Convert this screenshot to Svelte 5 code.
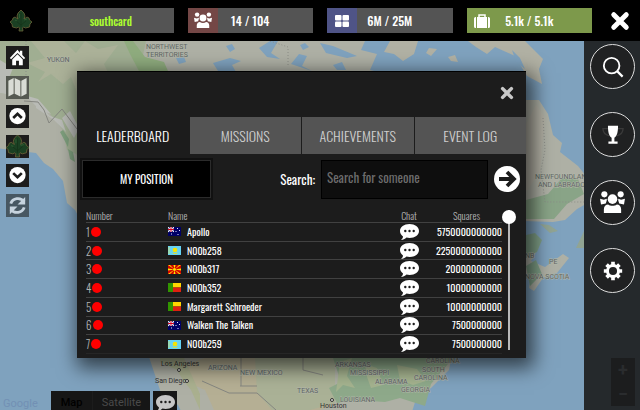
<script>
  const stats = [
    { id: 'name', text: 'southcard' },
    { id: 'crew', text: '14 / 104' },
    { id: 'squares', text: '6M / 25M' },
    { id: 'bag', text: '5.1k / 5.1k' }
  ];

  const tools = ['home', 'map', 'up', 'leaf', 'down', 'refresh'];
  const menu = ['search', 'trophy', 'people', 'settings'];
  const tabs = ['LEADERBOARD', 'MISSIONS', 'ACHIEVEMENTS', 'EVENT LOG'];

  const players = [
    { name: 'Apollo', flag: 'au', squares: '5750000000000' },
    { name: 'N00b258', flag: 'kz', squares: '2250000000000' },
    { name: 'N00b317', flag: 'mk', squares: '20000000000' },
    { name: 'N00b352', flag: 'bj', squares: '10000000000' },
    { name: 'Margarett Schroeder', flag: 'bj', squares: '10000000000' },
    { name: 'Walken The Talken', flag: 'au', squares: '7500000000' },
    { name: 'N00b259', flag: 'kz', squares: '7500000000' }
  ];

  let active = $state('LEADERBOARD');
  let query = $state('');
  let scroll = $state(0);
</script>

{#snippet leaf()}
  <svg class="leaf" viewBox="0 0 22 22" aria-hidden="true">
    <path d="M11 0l3 3 1 3-1 3 3-2 2 1 .5 2L22 12l-2 2-.5 3-4 1-2-1-1 1 .5 3h-4l.5-3-1-1-2 1-4-1L2 14l-2-2 2.500-2L3 8l2-1 3 2-1-3 1-3z" fill="#1b4023" stroke="#6b6238" stroke-width=".8" />
    <path d="M11 3v14M11 15l-5-4M11 15l5-4" fill="none" stroke="#143319" stroke-width=".8" />
    <path d="M9.500 4v4M14 10l3-1M5 10l2 1" fill="none" stroke="#2d5c31" />
  </svg>
{/snippet}

{#snippet people()}
  <svg viewBox="0 0 26 24" fill="currentColor" aria-hidden="true">
    <circle cx="4.500" cy="3.500" r="3.200" />
    <circle cx="21.500" cy="3.500" r="3.200" />
    <path d="M0 8l4 1 3-1v2l-1 3-5 1zM26 8l-4 1-3-1v2l1 3 5 1z" />
    <circle cx="13" cy="8.500" r="5" />
    <path d="M4 23v-4c0-3 2-5 4.500-5 2.500 2 6.500 2 9 0 2.500 0 4.500 2 4.500 5v4z" />
  </svg>
{/snippet}

{#snippet bubble()}
  <svg class="bubble" viewBox="0 0 19 16" aria-hidden="true">
    <path d="M9.500 0C15 0 19 3 19 7s-4 7-9.500 7l-3-.4C5 15 3 16 1 16c1-1 2-2 2-3.500C1 11 0 9 0 7c0-4 4-7 9.500-7z" fill="currentColor" />
    <circle cx="5.300" cy="7" r="1.200" fill="#1c1c1c" />
    <circle cx="9.500" cy="7" r="1.200" fill="#1c1c1c" />
    <circle cx="13.700" cy="7" r="1.200" fill="#1c1c1c" />
  </svg>
{/snippet}

{#snippet cross()}
  <svg viewBox="0 0 16 16" aria-hidden="true">
    <path d="M3 3l10 10M13 3L3 13" stroke="currentColor" stroke-width="4" stroke-linecap="round" />
  </svg>
{/snippet}

{#snippet flag(code)}
  <svg class="flag" viewBox="0 0 13 9" aria-hidden="true">
    {#if code === 'au'}
      <path d="M0 0h13v9H0z" fill="#000066" />
      <path d="M0 0l6 5M6 0L0 5" stroke="#fff" />
      <path d="M3 0v5M0 2.500h6" stroke="#fff" stroke-width="1.800" />
      <path d="M3 0v5M0 2.500h6" stroke="#d8001e" />
      <path d="M3 6.500h1v1H3zM9 1h1v1H9zM7.500 4h1v1h-1zM11 3h1v1h-1zM9.500 7h1v1h-1z" fill="#dfe1ff" />
    {:else if code === 'kz'}
      <path d="M0 0h13v9H0z" fill="#65d3f5" />
      <path d="M1 1v7" stroke="#c6de74" />
      <circle cx="7" cy="4" r="2.300" fill="#f7e300" />
      <path d="M3.500 5c2 3 5 3 7 0l-2 3h-3z" fill="#e2df2a" />
    {:else if code === 'mk'}
      <path d="M0 0h13v9H0z" fill="#d20000" />
      <path d="M0 0h2l4.500 4.500L11 0h2L0 9h2l4.500-4.500L11 9h2zM5.500 0h2l-1 4.500 1 4.500h-2l1-4.500zM0 3.500l6.500 1-6.500 1zM13 3.500l-6.500 1 6.500 1z" fill="#ffe600" />
      <circle cx="6.500" cy="4.500" r="1.800" fill="#ffe600" stroke="#d20000" stroke-width=".5" />
    {:else}
      <path d="M0 0h5v9H0z" fill="#319400" />
      <path d="M5 0h8v4.500H5z" fill="#ffd600" />
      <path d="M5 4.500h8V9H5z" fill="#de2110" />
    {/if}
  </svg>
{/snippet}

<div class="game">
  <header>
    <a class="clan" href="#clan" aria-label="Clan">{@render leaf()}</a>
    <div class="stats">
      {#each stats as stat}
        <div class="stat {stat.id}">
          {#if stat.id !== 'name'}
            <span class="stat-icon">
              {#if stat.id === 'crew'}
                {@render people()}
              {:else if stat.id === 'squares'}
                <svg viewBox="0 0 16 14" fill="currentColor" aria-hidden="true">
                  <rect x="1" y="1" width="6.500" height="5.500" rx="1" />
                  <rect x="8.500" y="1" width="6.500" height="5.500" rx="1" />
                  <rect x="1" y="7.500" width="6.500" height="5.500" rx="1" />
                  <rect x="8.500" y="7.500" width="6.500" height="5.500" rx="1" />
                </svg>
              {:else}
                <svg viewBox="0 0 16 14" fill="currentColor" aria-hidden="true">
                  <path d="M5 3V1h6v2" fill="none" stroke="currentColor" stroke-width="1.500" />
                  <path d="M0 4.500Q0 3 1.500 3H2v11h-.5Q0 14 0 12.500zM3 3h10v11H3zM14 3h.5Q16 3 16 4.500v8q0 1.500-1.500 1.500H14z" />
                </svg>
              {/if}
            </span>
          {/if}
          <span class="stat-text">{stat.text}</span>
        </div>
      {/each}
    </div>
    <button class="exit" aria-label="Exit">{@render cross()}</button>
  </header>

  <main>
    <!-- World map -->
    <svg class="world" viewBox="0 41 640 369" preserveAspectRatio="xMidYMin slice" aria-hidden="true">
      <path d="M0 41h640v369H0z" fill="#7fa2be" />
      <path d="M0 41h365l-4 9 16 4-7 16 17 4 67 26 35 25 30-10 4-15h16l9 14 5 21 9 8-2 9 18 14 8 10v28l-9 5-12 11-12 2-30-1-12 17 23-2 5 11-8 14 14 6 18-13 6 4-12 15-14 5-9 13-5-3 2-11-18-3-30 37-29 34-5 25-18 18-15 11-5 16 3 10-7 7-20-9-15 2-9-3-16 3-16-1-10 5-10 13H214l-10-22-4 2 4 20h-7l-5-17-8-8-6-12-17-12-20-60-43-80-23-43-8-7-4-22-10-12-9-6-8-10-16-2-17-2-16-3z" fill="#aeb0a5" />
      <path d="M0 41h146l-6 28 30 45v60H92l-16-20-9-4-4-20-13-16-12-8-10-8-28-5z" fill="#a0ae92" />
      <path d="M31 41l14 17-18 5 18 9-7 10 13-8 12 10 8-7 7 18 24 16 14-22-12-25 14-19-20 4-13-8-9 12-12-12z" fill="#b1b49d" opacity=".7" />
      <path d="M0 60l13 8-4 10 16 5-8 10 21 6 13 15-11-4-12-12-28-5zM62 118l8-7 9 17-5 10zM36 102l14 14 12 4 4 12-12-12-18-12z" fill="#b9bbb6" />
      <path d="M124 41h9l12 16 19 5 4 9h-29l-9-17z" fill="#8fac7e" />
      <path d="M60 132l3-2 6 9-1 8zM68 149l5 3 2 10-5-3z" fill="#7e9f7d" />
      <path d="M205 358h130l-8 20 8 25-15 7H214l-9-20-16-7-11-16z" fill="#b5af94" />
      <path d="M160 358h24l8 18 8 18v16l-9-20-8-10-6-10-17-8z" fill="#aab08f" />
      <path d="M255 358h80v45l-25 7h-38l-15-18z" fill="#aab196" />
      <path d="M333 358h120l-22 26-6 22-25-8-15 4-30-2-18 3-8-15 12-6z" fill="#8ea98a" />
      <path d="M340 362l12-4-5 18 8 12-12-3-7 7zM365 364l12 4 6 17-12 3-4-11zM397 365l20 4 9 12-13 4-13-5z" fill="#a5b38f" />
      <path d="M526 200l22-6 14-16 16 1 6 15-17 10-13 15h-28z" fill="#89a487" />
      <path d="M526 235l9-2 7 7-5 12-11 5zM526 266l10-6 6 14-12 12z" fill="#7f9f87" />
      <path d="M540 224l9 1 9 6-8 2zM584 231l-8 17h8z" fill="#91a493" />
      <path d="M213 63l17-5 11 3-9 4 4 7-18-1zM259 48l11-7h8l-7 12 9 6-13-2zM291 64l8-10 8 2-5 10 10 5zM320 43l13 3 24 10-10 2-21-5zM176 58l8-1 2 5-7 2zM333 65l9-3 4 8h-9zM226 46l6-2 3 5-5 3zM300 45l5-2 4 4-6 3z" fill="#7fa2be" />
      <path d="M390 41h28l-4 13-11 7-9-7-10-2zM429 48l8 1-6 7-5-3zM448 57l7-2 3 7-7-1zM468 41h57l18 18-4 10 3 15-15-8-12-20-20-9-8 7-11-7z" fill="#b1b1a4" />
      <path d="M512 50l8 8 5 11-9-7z" fill="#7fa2be" />
      <path d="M526 124l10-20 9 14-5 54-14 20z" fill="#b4b1a4" opacity=".7" />
      <path d="M24 101l14 1 6 8 5 13 13-14 15 20M202 381l27 12h28l19 17M241 386v-28M257 386h-17M303 358v12l20 5" fill="none" stroke="#858680" stroke-width="1" />
      <path d="M270 41l18 6v20M543 118l2 32-4 20 4 32h39M26 41v60" fill="none" stroke="#8b8d87" stroke-dasharray="1 2" />
      <g class="places">
        <text x="47" y="62">YUKON</text>
        <text x="146" y="49">NORTHWEST</text>
        <text x="146" y="57">TERRITORIES</text>
        <text x="208" y="370">ARIZONA</text>
        <text x="240" y="375">NEW MEXICO</text>
        <text x="297" y="393">TEXAS</text>
        <text x="335" y="367">ARKANSAS</text>
        <text x="350" y="375">MISSISSIPPI</text>
        <text x="375" y="384">ALABAMA</text>
        <text x="340" y="402">LOUISIANA</text>
        <text x="401" y="392">GEORGIA</text>
        <text x="426" y="363">CAROLINA</text>
        <text x="422" y="372">SOUTH</text>
        <text x="414" y="380">CAROLINA</text>
        <text x="535" y="179">NEWFOUNDLAND</text>
        <text x="538" y="187">AND LABRADOR</text>
        <text x="525" y="258">NB</text>
        <text x="549" y="264">PE</text>
        <text x="525" y="279">NOVA SCOTIA</text>
      </g>
      <g class="cities">
        <text x="161" y="366">Los Angeles</text>
        <text x="155" y="383">San Diego</text>
        <text x="320" y="408">Houston</text>
        <circle cx="179" cy="370" r="1.500" />
        <circle cx="187" cy="381" r="1.500" />
        <circle cx="332" cy="400" r="1.500" />
      </g>
      <text class="google" x="3" y="407">Google</text>
    </svg>

    <nav class="tools" aria-label="Map tools">
      {#each tools as tool}
        <button class="tool {tool}" aria-label={tool}>
          {#if tool === 'home'}
            <svg viewBox="0 0 24 24" fill="#fff" aria-hidden="true">
              <path d="M12 4L4 12.500l1.300 1.300L12 7.300l6.700 6.500 1.300-1.300-3-3V5h-2.500v2zM6.500 14v6h4v-4.500h3V20h4v-6L12 8.700z" />
            </svg>
          {:else if tool === 'map'}
            <svg viewBox="0 0 24 24" aria-hidden="true">
              <path d="M2.500 5l5.500-3v16.500l-5.500 3zM9 2l6 3v16.500l-6-3zM16 5l5.500-3v16.500l-5.500 3z" fill="#d9dcd5" />
            </svg>
          {:else if tool === 'leaf'}
            {@render leaf()}
          {:else if tool === 'refresh'}
            <svg viewBox="0 0 24 24" aria-hidden="true">
              <path d="M5 10c2-6 10-7 14-2M19 14c-2 6-10 7-14 2" fill="none" stroke="#c6d3de" stroke-width="3" />
              <path d="M20 3v8h-8zM4 21v-8h8z" fill="#c6d3de" />
            </svg>
          {:else}
            <svg viewBox="0 0 24 24" aria-hidden="true">
              <circle cx="12" cy="11.500" r="8.500" fill="#fff" />
              <path d={tool === 'up' ? 'M7.500 13.500L12 9.200l4.500 4.300' : 'M7.500 9.500l4.500 4.300 4.500-4.300'} fill="none" stroke="#1c1c1c" stroke-width="2.800" />
            </svg>
          {/if}
        </button>
      {/each}
    </nav>

    <section class="dialog" role="dialog" aria-label="Leaderboard">
      <div class="dialog-top">
        <button class="close" aria-label="Close">{@render cross()}</button>
      </div>

      <div class="tabs" role="tablist">
        {#each tabs as tab}
          <button role="tab" aria-selected={active === tab} class:active={active === tab} onclick={() => (active = tab)}>{tab}</button>
        {/each}
      </div>

      <form class="find" onsubmit={(e) => e.preventDefault()}>
        <button class="position" type="button">MY POSITION</button>
        <label for="query">Search:</label>
        <input id="query" type="text" placeholder="Search for someone" bind:value={query} />
        <button class="go" aria-label="Search">
          <svg viewBox="0 0 26 26" aria-hidden="true">
            <circle cx="13" cy="13" r="13" fill="#fff" />
            <path d="M5 13h15M13 6l7 7-7 7" fill="none" stroke="#1c1c1c" stroke-width="3.800" />
          </svg>
        </button>
      </form>

      <div class="list">
        <table>
          <thead>
            <tr>
              <th class="number">Number</th>
              <th>Name</th>
              <th class="chat">Chat</th>
              <th class="squares">Squares</th>
            </tr>
          </thead>
          <tbody>
            {#each players as player, i}
              <tr>
                <td class="rank"><div>{i + 1}<span class="dot"></span></div></td>
                <td class="player"><div>{@render flag(player.flag)}{player.name}</div></td>
                <td class="chat"><button aria-label="Chat with {player.name}">{@render bubble()}</button></td>
                <td class="total">{player.squares}</td>
              </tr>
            {/each}
          </tbody>
        </table>
        <input class="scroll" type="range" min="0" max="100" bind:value={scroll} aria-label="Scroll list" />
      </div>
    </section>

    <aside>
      {#each menu as item}
        <button class="round {item}" aria-label={item}>
          {#if item === 'search'}
            <svg viewBox="0 0 24 24" fill="none" stroke="#fff" aria-hidden="true">
              <circle cx="10.500" cy="10.500" r="8.500" stroke-width="2" />
              <path d="M16.500 16.500l6 6" stroke-width="2.400" />
            </svg>
          {:else if item === 'trophy'}
            <svg viewBox="0 0 24 24" aria-hidden="true">
              <path d="M7 5H1c0 5 3 7 7 8M17 5h6c0 5-3 7-7 8" fill="none" stroke="#3a3a3a" stroke-width="1.500" />
              <path d="M6.500 2h11c0 7-1 11-4 13v4h3.500v2.500H7V19h3.500v-4c-3-2-4-6-4-13z" fill="#fff" />
            </svg>
          {:else if item === 'people'}
            {@render people()}
          {:else}
            <svg viewBox="0 0 24 24" aria-hidden="true">
              <circle cx="12" cy="12" r="6" fill="none" stroke="#fff" stroke-width="3.200" />
              <g stroke="#fff" stroke-width="4">
                <path d="M12 2v4M12 18v4M2 12h4M18 12h4M5 5l3 3M16 16l3 3M19 5l-3 3M8 16l-3 3" />
              </g>
            </svg>
          {/if}
        </button>
      {/each}
      <div class="zoom">
        <button aria-label="Zoom in">+</button>
        <button aria-label="Zoom out">−</button>
      </div>
    </aside>

    <div class="map-bar">
      <button class="kind on">Map</button>
      <button class="kind">Satellite</button>
      <button class="talk" aria-label="Chat">{@render bubble()}</button>
    </div>
  </main>
</div>

<style>
  :global(body) {
    margin: 0;
    background: #000;
  }

  .game {
    --dark: #1c1c1c;
    --grey: #545454;
    display: flex;
    flex-direction: column;
    height: 100vh;
    overflow: hidden;
    color: #fff;
    font-family: Oswald, 'Roboto Condensed', 'Liberation Sans Narrow', 'Liberation Sans', sans-serif;
    font-size: 12px;
  }

  * { box-sizing: border-box; }

  button {
    display: flex;
    align-items: center;
    justify-content: center;
    padding: 0;
    border: 0;
    background: none;
    color: inherit;
    font: inherit;
    cursor: pointer;
  }

  svg { display: block; }

  /* Header */
  header {
    display: flex;
    align-items: center;
    height: 41px;
    flex: none;
    background: #000;
  }

  .clan {
    width: 22px;
    margin: 0 16px 0 10px;
  }

  .stats {
    flex: 1;
    display: grid;
    grid-template-columns: repeat(4, 1fr);
    gap: 14px;
  }

  .stat {
    display: flex;
    align-items: center;
    height: 25px;
    background: var(--grey);
    font-size: 12px;
    font-weight: 500;
  }

  .stat-icon {
    display: flex;
    align-items: center;
    justify-content: center;
    align-self: stretch;
    width: 30px;
  }
  .stat-icon svg { width: 16px; height: 14px; }
  .crew .stat-icon svg { width: 18px; height: 17px; }
  .crew .stat-icon { background: #744746; }
  .squares .stat-icon { background: #4f5487; }
  .stat.bag { background: #7d994b; }

  /* As wide as the icon, so the text is centred on the whole box */
  .stat-text {
    flex: 1;
    text-align: center;
    padding-right: 30px;
  }
  .name .stat-text {
    padding: 0;
    color: #adff2f;
    font-size: 11px;
  }

  .exit {
    width: 48px;
    height: 41px;
    margin-left: auto;
    padding-left: 8px;
  }
  .exit svg { width: 20px; }

  /* Map */
  main {
    position: relative;
    flex: 1;
    display: flex;
    align-items: flex-start;
    min-height: 0;
  }

  .world {
    position: absolute;
    inset: 0;
    width: 100%;
    height: 100%;
  }

  .world text {
    font-family: Roboto, sans-serif;
    font-size: 7px;
    fill: #5f6564;
  }
  .places text {
    paint-order: stroke;
    stroke: #b3b8aa;
    stroke-width: 1px;
  }
  .cities text { fill: #333; }
  .cities circle { fill: #ddd; stroke: #333; }
  .world .google { font-size: 11px; fill: #7290b4; }

  /* Map tools */
  .tools {
    position: relative;
    flex: none;
    display: flex;
    flex-direction: column;
    justify-content: space-between;
    width: 77px;
    height: 176px;
    padding: 5px 0 0 6px;
  }

  .tool {
    width: 23px;
    height: 23px;
    background: var(--dark);
  }
  .tool svg { width: 23px; height: 23px; }
  .tool.map { background: #555951; }
  .tool.refresh { background: #475762; }

  /* Dialog */
  .dialog {
    position: relative;
    flex: 1;
    min-width: 0;
    margin: 30px 58px 0 0;
    background: var(--dark);
    border-top: 1px solid #000;
    box-shadow: 4px 6px 18px 4px rgba(0, 0, 0, 0.6);
  }

  .dialog-top {
    display: flex;
    justify-content: flex-end;
    align-items: center;
    height: 45px;
    padding: 0 12px 4px 0;
  }
  .close {
    width: 14px;
    color: #c8c8c8;
  }
  .close svg { width: 14px; }

  .tabs {
    display: grid;
    grid-template-columns: repeat(4, 1fr);
    gap: 1px;
  }
  .tabs button {
    height: 37px;
    background: var(--grey);
    color: #cecece;
    font-size: 14px;
    font-weight: 300;
  }
  .tabs .active {
    background: var(--dark);
    color: #fff;
  }

  .find {
    display: flex;
    align-items: center;
    height: 50px;
    padding: 0 6px 0 3px;
  }

  .position {
    width: 133px;
    height: 42px;
    background: #000;
    border: 2px solid #111;
    outline: 1px solid #2b2b2b;
    outline-offset: -3px;
    font-size: 11px;
    font-weight: 400;
  }

  label {
    margin-left: auto;
    font-size: 13px;
    font-weight: 400;
  }

  #query {
    width: 167px;
    height: 39px;
    margin: 0 6px;
    padding: 0 5px 4px;
    background: #0e0e0e;
    border: 1px solid #000;
    color: #fff;
    font: inherit;
    font-size: 13px;
    font-weight: 400;
  }
  #query::placeholder { color: #6c6c6c; }

  .go, .go svg { width: 26px; height: 26px; }

  /* Player list */
  .list {
    display: flex;
    height: 154px;
    padding: 6px 10px 8px 9px;
  }

  table {
    flex: 1;
    height: 144px;
    border-collapse: collapse;
    table-layout: fixed;
    font-size: 10px;
    line-height: 12px;
  }

  th {
    height: 12px;
    padding: 0;
    color: #b4b4b4;
    font-weight: 300;
    text-align: left;
  }
  .number { width: 82px; }
  .chat { width: 44px; text-align: center; }
  th.squares { width: 71px; text-align: center; }

  td {
    padding: 0;
    border-top: 1px solid #414141;
    font-weight: 400;
  }
  tbody tr:last-child td { border-bottom: 1px solid #262626; }

  td div {
    display: flex;
    align-items: center;
  }
  .rank {
    color: #b4b4b4;
    font-weight: 300;
    font-size: 11px;
  }
  .dot {
    width: 10px;
    height: 10px;
    margin-left: 1px;
    border-radius: 50%;
    background: #f00;
  }
  .flag {
    width: 13px;
    height: 9px;
    margin-right: 6px;
  }
  .chat button { margin: 0 auto; }
  .bubble { width: 19px; height: 16px; }
  .total { text-align: right; }

  .scroll {
    appearance: none;
    writing-mode: vertical-lr;
    width: 14px;
    height: 140px;
    margin: 0;
    background: linear-gradient(#b9b9b9, #b9b9b9) center / 2px 100% no-repeat;
  }
  .scroll::-webkit-slider-thumb {
    appearance: none;
    width: 14px;
    height: 14px;
    border-radius: 50%;
    background: #fff;
  }

  /* Side menu */
  aside {
    position: relative;
    align-self: stretch;
    flex: none;
    display: flex;
    flex-direction: column;
    gap: 23px;
    width: 56px;
    padding: 3px 5px 4px 6px;
    background: #25292c;
  }

  .round {
    flex: none;
    width: 45px;
    height: 45px;
    border: 1px solid #ddd;
    border-radius: 50%;
    background: #202122;
  }
  .round svg { width: 22px; height: 22px; }
  .round.people svg { width: 25px; height: 23px; }

  .zoom {
    align-self: flex-end;
    margin-top: auto;
    background: #1c1d1e;
    color: #2a2c2e;
  }
  .zoom button {
    width: 24px;
    height: 24px;
    font-family: Roboto, sans-serif;
    font-size: 18px;
    font-weight: 700;
    line-height: 20px;
  }

  /* Map type switch, laid over the bottom edge of the map */
  .map-bar {
    position: absolute;
    left: 51px;
    bottom: 0;
    display: flex;
    height: 19px;
    font-family: Roboto, sans-serif;
  }
  .kind {
    width: 41px;
    padding-top: 3px;
    background: #161616;
    color: #4a4a4a;
    font-size: 11px;
  }
  .kind + .kind { width: 58px; border-left: 1px solid #1c1c1c; }
  .kind.on {
    color: #000;
    font-weight: 500;
  }
  .talk {
    width: 24px;
    margin-left: 3px;
    padding-top: 4px;
    background: #161616;
    color: #c5c5c5;
  }
</style>
